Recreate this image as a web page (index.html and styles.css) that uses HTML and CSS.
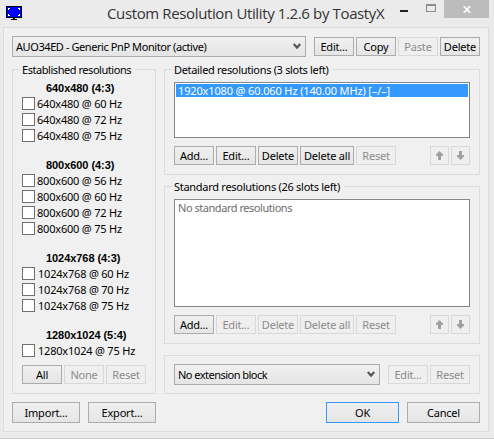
FILE: index.html
```html
<!DOCTYPE html>
<html lang="en">
<head>
<meta charset="utf-8">
<title>Custom Resolution Utility</title>
<link rel="stylesheet" href="styles.css">
</head>
<body>
<div class="window">
  <header class="titlebar">
    <svg class="app-icon" width="16" height="14" viewBox="0 0 16 14" shape-rendering="crispEdges"><path fill="#000" d="M0 0h16v12H0zM7 12h2v1H7zM5 13h6v1H5z"/><path fill="#00f" d="M1 1h14v10H1z"/><path fill="#fff" d="M2 2h2v1H3v1H2zM12 2h2v2h-1V3h-1zM2 8h1v1h1v1H2zM13 8h1v2h-2V9h1z"/></svg>
    <h1 class="title"><span>Custom Resolution Utility 1.2.6 by ToastyX</span></h1>
    <div class="controls">
      <svg class="min" width="8" height="2"><path fill="#222" d="M0 0h8v2H0z"/></svg>
      <svg class="max" width="10" height="8" shape-rendering="crispEdges"><path fill="#8c8c8c" fill-rule="evenodd" d="M0 0h10v8H0zM1 2v5h8V2z"/></svg>
      <div class="close"><svg width="8" height="7" viewBox="0 0 8 7"><path d="M.7 0l6.600 7M7.300 0L.7 7" stroke="#fff" stroke-width="1.7"/></svg></div>
    </div>
  </header>
  <main class="client">
    <div class="toolbar">
      <div class="combo wide"><span class="w-monitor">AUO34ED - Generic PnP Monitor (active)</span><svg class="chev" width="8" height="7" viewBox="0 0 8 7"><path d="M.7 1L4 4.600 7.300 1" fill="none" stroke="#555" stroke-width="2.2"/></svg></div>
      <div class="buttons"><button>Edit...</button><button>Copy</button><button disabled>Paste</button><button>Delete</button></div>
    </div>
    <div class="panels">
      <section class="group established">
        <h2 class="legend w-est">Established resolutions</h2>
        <div class="modes">
          <h3>640x480 (4:3)</h3>
          <label><i></i><span>640x480 @ 60 Hz</span></label>
          <label><i></i><span>640x480 @ 72 Hz</span></label>
          <label><i></i><span>640x480 @ 75 Hz</span></label>
        </div>
        <div class="modes">
          <h3>800x600 (4:3)</h3>
          <label><i></i><span>800x600 @ 56 Hz</span></label>
          <label><i></i><span>800x600 @ 60 Hz</span></label>
          <label><i></i><span>800x600 @ 72 Hz</span></label>
          <label><i></i><span>800x600 @ 75 Hz</span></label>
        </div>
        <div class="modes four">
          <h3>1024x768 (4:3)</h3>
          <label><i></i><span>1024x768 @ 60 Hz</span></label>
          <label><i></i><span>1024x768 @ 70 Hz</span></label>
          <label><i></i><span>1024x768 @ 75 Hz</span></label>
        </div>
        <div class="modes four">
          <h3>1280x1024 (5:4)</h3>
          <label><i></i><span>1280x1024 @ 75 Hz</span></label>
        </div>
        <div class="buttons"><button>All</button><button disabled>None</button><button disabled>Reset</button></div>
      </section>
      <div class="right">
        <section class="group detailed">
          <h2 class="legend w-det">Detailed resolutions (3 slots left)</h2>
          <div class="list"><div class="item selected"><span class="w-item">1920x1080 @ 60.060 Hz (140.00 MHz) [–/–]</span></div></div>
          <div class="buttons"><button>Add...</button><button>Edit...</button><button>Delete</button><button class="all">Delete all</button><button disabled>Reset</button>
            <button class="arrow first" disabled><svg width="7" height="9"><path fill="#a0a0a0" d="M3.500 0L7 3.500V5H5v4H2V5H0V3.500z"/></svg></button><button class="arrow" disabled><svg width="7" height="9"><path fill="#a0a0a0" d="M3.500 9L7 5.500V4H5V0H2v4H0v1.500z"/></svg></button></div>
        </section>
        <section class="group standard">
          <h2 class="legend w-std">Standard resolutions (26 slots left)</h2>
          <div class="list"><div class="item muted"><span class="w-none">No standard resolutions</span></div></div>
          <div class="buttons"><button>Add...</button><button disabled>Edit...</button><button disabled>Delete</button><button class="all" disabled>Delete all</button><button disabled>Reset</button>
            <button class="arrow first" disabled><svg width="7" height="9"><path fill="#a0a0a0" d="M3.500 0L7 3.500V5H5v4H2V5H0V3.500z"/></svg></button><button class="arrow" disabled><svg width="7" height="9"><path fill="#a0a0a0" d="M3.500 9L7 5.500V4H5V0H2v4H0v1.500z"/></svg></button></div>
        </section>
        <section class="group extension">
          <div class="combo"><span class="w-ext">No extension block</span><svg class="chev" width="8" height="7" viewBox="0 0 8 7"><path d="M.7 1L4 4.600 7.300 1" fill="none" stroke="#555" stroke-width="2.2"/></svg></div>
          <div class="buttons"><button disabled>Edit...</button><button disabled>Reset</button></div>
        </section>
      </div>
    </div>
    <footer class="footer">
      <button class="file">Import...</button><button class="file">Export...</button>
      <button class="ok">OK</button><button class="cancel">Cancel</button>
    </footer>
  </main>
</div>
</body>
</html>
```
FILE: styles.css
```css
* { box-sizing: border-box; }
body { margin: 0; font: 11px/14px "Noto Sans", sans-serif; color: #000; letter-spacing: -0.2px; }
h1, h2, h3 { margin: 0; font-weight: 400; font-size: inherit; }
svg { display: block; flex: none; }
span { white-space: nowrap; }
.window { width: 494px; height: 439px; background: #ebebeb; border-bottom: 1px solid #ccc; display: flex; flex-direction: column; }
.titlebar { height: 27px; flex: none; display: flex; align-items: flex-start; padding-left: 6px; }
.app-icon { margin-top: 6px; }
.title { margin-left: 85px; width: 277px; font: 15px/26px "Open Sans", sans-serif; color: #333; letter-spacing: -0.37px; white-space: nowrap; }
.controls { flex: 1; display: flex; }
.min { margin: 10px 0 0 16px; }
.max { margin: 4px 0 0 18px; }
.close { width: 45px; height: 18px; margin-left: 8px; background: #bcbcbc; display: flex; align-items: center; justify-content: center; }
.client { width: 486px; height: 405px; margin-left: 3px; border: 1px solid #dcdcdc; background: #f0f0f0; padding: 8px; }
.toolbar { display: flex; align-items: center; justify-content: space-between; height: 21px; }
.combo { width: 206px; height: 21px; border: 1px solid #acacac; background: linear-gradient(#f0f0f0, #e5e5e5); display: flex; align-items: center; justify-content: space-between; padding: 0 4px 0 3px; flex: none; }
.combo.wide { width: 294px; }
.buttons { display: flex; gap: 2px; }
button { width: 40px; height: 19px; flex: none; padding: 0; margin: 0; border: 1px solid #acacac; border-radius: 0; background: linear-gradient(#f0f0f0, #e5e5e5); font: inherit; letter-spacing: inherit; color: #000; display: flex; align-items: center; justify-content: center; white-space: nowrap; }
button:disabled { border-color: #d9d9d9; background: #efefef; color: #8b8b8b; }
.all { width: 54px; }
.arrow { width: 19px; }
.arrow.first { margin-left: 32px; }
.panels { display: flex; gap: 8px; margin-top: 12px; height: 325px; }
.group { border: 1px solid #dcdcdc; padding: 0 9px; }
.legend { width: max-content; height: 14px; margin: -7px 0 0 -2px; padding: 0 4px 0 2px; background: #f0f0f0; white-space: nowrap; }
.w-monitor { letter-spacing: -0.42px; }
.w-est { letter-spacing: -0.45px; }
.w-det { letter-spacing: -0.32px; }
.w-std { letter-spacing: -0.28px; }
.w-item { letter-spacing: -0.14px; }
.w-none { letter-spacing: -0.46px; }
.w-ext { letter-spacing: -0.52px; }
.established { width: 144px; }
.modes + .modes { margin-top: 13px; }
.established .legend { margin-bottom: 3px; }
.modes h3 { font: bold 11px/16px "Liberation Sans", sans-serif; padding-left: 24px; letter-spacing: -0.06px; }
.modes label { display: flex; height: 16px; align-items: flex-start; padding-top: 1px; gap: 2px; }
.modes.four label { gap: 3px; }
.modes i { width: 13px; height: 13px; border: 1px solid #707070; background: #fff; }
.established .buttons { margin-top: 6px; }
.right { width: 316px; }
.detailed { height: 106px; }
.standard { height: 158px; margin-top: 11px; }
.extension { height: 39px; margin-top: 11px; display: flex; align-items: center; justify-content: space-between; }
.list { height: 56px; margin: 5px 0 8px; border: 1px solid #828790; background: #fff; padding: 1px; }
.standard .list { height: 108px; }
.item { height: 13px; line-height: 14px; padding-left: 2px; }
.selected { background: #39f; color: #fff; }
.muted { color: #6d6d6d; }
.footer { display: flex; margin-top: 8px; }
.footer button { height: 21px; width: 73px; }
.footer .file { width: 68px; margin-right: 8px; }
.footer .ok { margin: 0 8px 0 162px; border-color: #39f; }
```
